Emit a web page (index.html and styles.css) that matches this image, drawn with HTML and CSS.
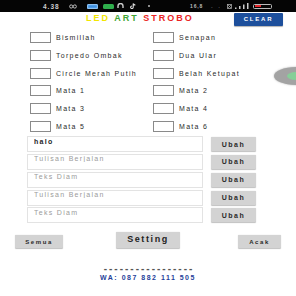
FILE: index.html
```html
<!DOCTYPE html>
<html lang="id">
<head>
    <meta charset="UTF-8">
    <meta name="viewport" content="width=device-width, initial-scale=1.0">
    <title>LED ART STROBO</title>
    <link rel="stylesheet" href="styles.css">
</head>
<body>
    <div class="phone">
        <div class="statusbar">
            <div class="sb-left">
                <span class="time">4.38</span>
                <svg class="ic-link" width="8" height="5" viewBox="0 0 8 5"><circle cx="2.2" cy="2.5" r="1.6" fill="none" stroke="#bbb" stroke-width="1"/><circle cx="5.8" cy="2.5" r="1.6" fill="none" stroke="#bbb" stroke-width="1"/></svg>
                <span class="ic-app blue"></span>
                <span class="ic-app green"></span>
                <svg class="ic-round" width="7" height="6" viewBox="0 0 7 6"><path d="M1 5 V3 A2.5 2.5 0 0 1 6 3 V5" fill="none" stroke="#ccc" stroke-width="1.4"/></svg>
                <svg class="ic-tiktok" width="6" height="6" viewBox="0 0 6 6"><path d="M3.2 0.5 V4.2 A1.3 1.3 0 1 1 2 3 M3.2 0.5 C3.6 1.6 4.4 2 5.4 2" fill="none" stroke="#ddd" stroke-width="1.1"/></svg>
                <span class="ic-dot"></span>
            </div>
            <div class="sb-right">
                <span class="speed">16,8</span>
                <span class="ic-dots">. .</span>
                <svg class="ic-x" width="5" height="5" viewBox="0 0 5 5"><rect x="0.5" y="0.5" width="4" height="4" fill="none" stroke="#aaa" stroke-width="0.8"/><path d="M1 1 L4 4 M4 1 L1 4" stroke="#aaa" stroke-width="0.7"/></svg>
                <svg class="ic-signal" width="15" height="6" viewBox="0 0 15 6"><rect x="0" y="4.5" width="1.5" height="1.5" fill="#ccc"/><rect x="4" y="3" width="1.5" height="3" fill="#ccc"/><rect x="8" y="1.5" width="1.5" height="4.5" fill="#ccc"/><rect x="12" y="0" width="1.5" height="6" fill="#ccc"/></svg>
                <span class="battery"><span class="battery-level"></span></span>
            </div>
        </div>

        <header class="topbar">
            <h1 class="title"><span class="led">LED</span> <span class="art">ART</span> <span class="strobo">STROBO</span></h1>
            <button class="btn-clear">CLEAR</button>
        </header>

        <div class="modes">
            <label class="mode"><span class="box"></span>Bismillah</label>
            <label class="mode"><span class="box"></span>Senapan</label>
            <label class="mode"><span class="box"></span>Torpedo Ombak</label>
            <label class="mode"><span class="box"></span>Dua Ular</label>
            <label class="mode"><span class="box"></span>Circle Merah Putih</label>
            <label class="mode"><span class="box"></span>Belah Ketupat</label>
            <label class="mode"><span class="box"></span>Mata 1</label>
            <label class="mode"><span class="box"></span>Mata 2</label>
            <label class="mode"><span class="box"></span>Mata 3</label>
            <label class="mode"><span class="box"></span>Mata 4</label>
            <label class="mode"><span class="box"></span>Mata 5</label>
            <label class="mode"><span class="box"></span>Mata 6</label>
        </div>

        <div class="texts">
            <div class="text-row">
                <input class="field filled" type="text" value="halo">
                <button class="btn-grey btn-ubah">Ubah</button>
            </div>
            <div class="text-row">
                <input class="field" type="text" placeholder="Tulisan Berjalan">
                <button class="btn-grey btn-ubah">Ubah</button>
            </div>
            <div class="text-row">
                <input class="field" type="text" placeholder="Teks Diam">
                <button class="btn-grey btn-ubah">Ubah</button>
            </div>
            <div class="text-row">
                <input class="field" type="text" placeholder="Tulisan Berjalan">
                <button class="btn-grey btn-ubah">Ubah</button>
            </div>
            <div class="text-row">
                <input class="field" type="text" placeholder="Teks Diam">
                <button class="btn-grey btn-ubah">Ubah</button>
            </div>
        </div>

        <div class="actions">
            <button class="btn-grey btn-small">Semua</button>
            <button class="btn-grey btn-setting">Setting</button>
            <button class="btn-grey btn-small btn-acak">Acak</button>
        </div>

        <div class="footer">
            <div class="dashes">-----------------</div>
            <div class="wa">WA: 087 882 111 505</div>
        </div>

        <!-- tombol melayang di pinggir layar -->
        <div class="float-btn"><span class="float-dot"></span></div>
    </div>
</body>
</html>
```

FILE: styles.css
```css
*{
    padding: 0;
    margin: 0;
    box-sizing: border-box;
}
body{
    font-family: "Liberation Sans", Arial, sans-serif;
    background: #fff;
}
button, input{
    font-family: inherit;
}
.phone{
    position: relative;
    width: 296px;
    height: 296px;
    overflow: hidden;
    background: #fff;
}

/* status bar */
.statusbar{
    height: 12px;
    background: #050505;
    display: flex;
    align-items: center;
    justify-content: space-between;
    padding: 0 24px 0 43px;
}
.sb-left, .sb-right{
    display: flex;
    align-items: center;
}
.time{
    font-size: 6.5px;
    font-weight: bold;
    color: #cfcfcf;
    letter-spacing: 1px;
    margin-right: 9px;
}
.ic-link{
    margin-right: 10px;
}
.ic-app{
    width: 11px;
    height: 5px;
    border-radius: 1.5px;
    margin-right: 5px;
}
.ic-app.blue{
    background: #3d8fe0;
    box-shadow: inset 0 0 0 1.2px #8cc0f0;
}
.ic-app.green{
    background: #2fae4c;
    margin-right: 3px;
}
.ic-round{
    margin-right: 6px;
}
.ic-tiktok{
    margin-right: 12px;
}
.ic-dot{
    width: 2px;
    height: 2px;
    border-radius: 50%;
    background: #bbb;
}
.speed{
    font-size: 5px;
    font-weight: bold;
    color: #bdbdbd;
    letter-spacing: 0.8px;
    margin-right: 8px;
}
.ic-dots{
    font-size: 6px;
    color: #aaa;
    letter-spacing: 2px;
    margin-right: 5px;
    line-height: 6px;
}
.ic-x{
    margin-right: 3px;
}
.ic-signal{
    margin-right: 3px;
}
.battery{
    width: 19px;
    height: 5px;
    border: 1px solid #bbb;
    border-radius: 1.5px;
    display: flex;
    padding: 0.5px;
}
.battery-level{
    width: 6px;
    background: #e3262a;
}

/* judul */
.topbar{
    height: 14px;
    display: flex;
    align-items: center;
    padding: 0 13px 0 86px;
}
.title{
    font-size: 9px;
    font-weight: bold;
    letter-spacing: 2px;
    line-height: 11px;
    margin-top: -1px;
}
.led{ color: #f2e600; }
.art{ color: #3fa535; }
.strobo{ color: #ea2424; }
.btn-clear{
    margin-left: auto;
    width: 49px;
    height: 13px;
    border: none;
    border-radius: 1px;
    background: #1d4f9c;
    color: #fff;
    font-size: 6px;
    font-weight: bold;
    letter-spacing: 1.8px;
    box-shadow: 0 1px 1px rgba(0,0,0,0.3);
}

/* pilihan mode */
.modes{
    display: grid;
    grid-template-columns: 123px 1fr;
    grid-auto-rows: 17.7px;
    padding: 3px 0 0 30px;
}
.mode{
    display: flex;
    align-items: center;
    gap: 5px;
    font-size: 7px;
    letter-spacing: 1.3px;
    color: #2b2b2b;
}
.box{
    width: 21px;
    height: 11px;
    border: 1px solid #8a8a8a;
    background: #fff;
}

/* kolom teks */
.texts{
    display: flex;
    flex-direction: column;
    gap: 1.8px;
    padding: 1px 0 0 27px;
}
.text-row{
    display: flex;
    align-items: center;
    gap: 8px;
}
.field{
    width: 176px;
    height: 16px;
    border: 1px solid #e3e3e3;
    padding: 0 6px 6px;
    font-size: 7px;
    letter-spacing: 1.3px;
    color: #1e1e1e;
    outline: none;
}
.field::placeholder{
    color: #9b9b9b;
}
.field.filled{
    font-weight: bold;
}
.btn-grey{
    border: none;
    border-radius: 1px;
    background: #d3d3d3;
    color: #2a2a2a;
    font-weight: bold;
    box-shadow: 0 0.5px 1px rgba(0,0,0,0.25);
}
.btn-ubah{
    width: 45px;
    height: 14px;
    font-size: 7px;
    letter-spacing: 1.5px;
}

/* tombol bawah */
.actions{
    display: grid;
    grid-template-columns: 1fr auto 1fr;
    align-items: end;
    padding: 9px 15px 0;
}
.btn-small{
    width: 48px;
    height: 13px;
    font-size: 6px;
    letter-spacing: 1.6px;
}
.btn-acak{
    width: 43px;
    justify-self: end;
}
.btn-setting{
    width: 64px;
    height: 16px;
    font-size: 9px;
    letter-spacing: 1.6px;
    color: #1e1e1e;
    padding-bottom: 2px;
}

.footer{
    text-align: center;
    padding-top: 16px;
    font-weight: bold;
    font-size: 7px;
    line-height: 9px;
}
.dashes{
    color: #555;
    font-size: 10px;
    letter-spacing: 2px;
    padding-left: 2px;
}
.wa{
    color: #1f3f9a;
    letter-spacing: 1.5px;
}

.float-btn{
    position: absolute;
    left: 274px;
    top: 67px;
    width: 44px;
    height: 18px;
    border-radius: 50%;
    background: #a3a3a3;
    box-shadow: 0 0 2px rgba(120,120,120,0.6);
}
.float-dot{
    position: absolute;
    left: 13px;
    top: 5px;
    width: 18px;
    height: 8px;
    border-radius: 50%;
    background: #86cf98;
}
```
